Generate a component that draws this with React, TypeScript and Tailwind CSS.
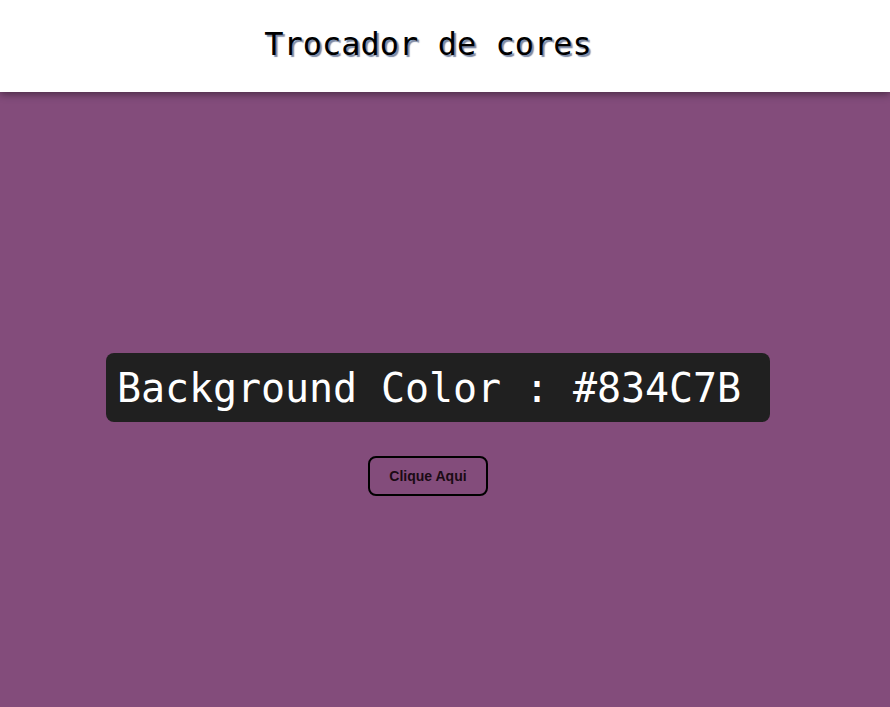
import React from "react";

export default function App() {
  return (
    <div className="flex min-h-[707px] w-full flex-col bg-[#834C7B]">
      <header className="relative z-10 flex h-[92px] items-center justify-center bg-white pb-[4px] pr-[34px] shadow-[0_2px_8px_rgba(0,0,0,0.45)]">
        <h1
          className="text-[32px] leading-none text-black [text-shadow:2px_2px_1px_#7d8aa6]"
          style={{ fontFamily: '"DejaVu Sans Mono", "Liberation Mono", monospace', fontWeight: 400 }}
        >
          Trocador de cores
        </h1>
      </header>
      <main className="flex flex-1 flex-col items-center pr-[34px] pt-[261px]">
        <div
          className="ml-[20px] flex h-[69px] w-[664px] items-center rounded-[8px] bg-[#202020] pl-[11px] text-[40px] leading-none tracking-[-0.08px] text-white"
          style={{ fontFamily: '"DejaVu Sans Mono", "Liberation Mono", monospace' }}
        >
          Background Color : #834C7B
        </div>
        <button
          className="mt-[34px] flex h-[40px] w-[120px] items-center justify-center rounded-[8px] border-2 border-black text-[14px] font-bold text-[#1a0a14]"
          style={{ fontFamily: '"Liberation Sans", Arial, sans-serif' }}
        >
          Clique Aqui
        </button>
      </main>
    </div>
  );
}
